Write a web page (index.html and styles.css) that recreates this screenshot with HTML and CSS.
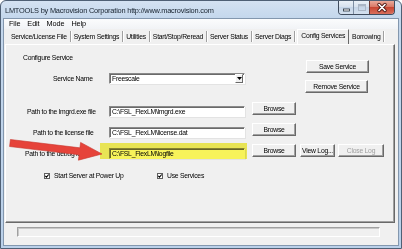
FILE: index.html
```html
<!DOCTYPE html>
<html>
<head>
<meta charset="utf-8">
<title>LMTOOLS</title>
<link rel="stylesheet" href="styles.css">
</head>
<body>
<div class="window">
  <div class="titlebar">
    <span class="title">LMTOOLS by Macrovision Corporation http://www.macrovision.com</span>
    <div class="caption">
      <span class="cap cap-min"><svg width="15" height="13" viewBox="0 0 15 13"><rect x="4.5" y="8" width="6" height="2" fill="#fff" stroke="#26303c" stroke-width="0.8"/></svg></span>
      <span class="cap cap-max"><svg width="16" height="13" viewBox="0 0 16 13"><rect x="4.5" y="3.5" width="7" height="6" fill="none" stroke="#aab6c6" stroke-width="1"/><rect x="5" y="4" width="6" height="1.5" fill="#aab6c6"/></svg></span>
      <span class="cap cap-close"><svg width="24" height="13" viewBox="0 0 24 13"><path d="M9 3.5 L15 9.5 M15 3.5 L9 9.5" stroke="#4a1612" stroke-width="3.4" stroke-linecap="round"/><path d="M9 3.5 L15 9.5 M15 3.5 L9 9.5" stroke="#fff" stroke-width="1.7" stroke-linecap="round"/></svg></span>
    </div>
  </div>
  <div class="client">
    <div class="menubar"><span>File</span><span>Edit</span><span>Mode</span><span>Help</span></div>
    <div class="tabs">
      <span class="tab">Service/License File</span>
      <span class="tab">System Settings</span>
      <span class="tab">Utilities</span>
      <span class="tab">Start/Stop/Reread</span>
      <span class="tab">Server Status</span>
      <span class="tab">Server Diags</span>
      <span class="tab tab-sel">Config Services</span>
      <span class="tab">Borrowing</span>
    </div>
    <div class="panel">
      <div class="top">
        <div class="cfg">
          <div class="heading">Configure Service</div>
          <div class="field-row svc">
            <span class="lbl lbl-svc">Service Name</span>
            <div class="combo">
              <span class="combo-val">Freescale</span>
              <span class="drop"><svg width="5" height="3" viewBox="0 0 5 3"><path d="M0 0 H5 L2.5 3 Z" fill="#000"/></svg></span>
            </div>
          </div>
        </div>
        <div class="svc-btns">
          <button class="btn btn-save">Save Service</button>
          <button class="btn btn-remove">Remove Service</button>
        </div>
      </div>
      <div class="field-row path-row">
        <span class="lbl lbl-lmgrd">Path to the lmgrd.exe file</span>
        <div class="tb">C:\FSL_FlexLM\lmgrd.exe</div>
        <button class="btn btn-browse">Browse</button>
      </div>
      <div class="field-row path-row">
        <span class="lbl lbl-license">Path to the license file</span>
        <div class="tb">C:\FSL_FlexLM\license.dat</div>
        <button class="btn btn-browse">Browse</button>
      </div>
      <div class="field-row path-row">
        <span class="lbl lbl-debug">Path to the debug log</span>
        <div class="tb">C:\FSL_FlexLM\logfile</div>
        <button class="btn btn-browse">Browse</button>
        <button class="btn btn-view">View Log...</button>
        <button class="btn btn-closelog">Close Log</button>
      </div>
      <div class="checks">
        <span class="chk chk-start"><svg class="box" width="6" height="6" viewBox="0 0 6 6"><rect x="0.5" y="0.5" width="5" height="5" fill="#fff" stroke="#5f5f5f"/><path d="M1.3 2.8 L2.5 4.1 L4.7 1.5" fill="none" stroke="#000" stroke-width="1.1"/></svg>Start Server at Power Up</span>
        <span class="chk"><svg class="box" width="6" height="6" viewBox="0 0 6 6"><rect x="0.5" y="0.5" width="5" height="5" fill="#fff" stroke="#5f5f5f"/><path d="M1.3 2.8 L2.5 4.1 L4.7 1.5" fill="none" stroke="#000" stroke-width="1.1"/></svg>Use Services</span>
      </div>
      <div class="hl"></div>
    </div>
    <div class="statusbar"><div class="status-field"></div></div>
  </div>
  <svg class="annot" width="402" height="249" viewBox="0 0 402 249">
    <polygon points="10.4,139.5 79.9,147.8 80.6,142.4 102,154 78.4,160.2 79.1,154.8 9.6,146.5" fill="#e6433a" stroke="#c8342c" stroke-width="0.6" stroke-linejoin="round"/>
  </svg>
</div>
</body>
</html>
```
FILE: styles.css
```css
* { box-sizing: border-box; margin: 0; padding: 0; }
html, body { width: 402px; height: 249px; overflow: hidden; }
body { background: #fff; font-family: "Liberation Sans", Arial, sans-serif; color: #000; }

.window {
  position: relative;
  width: 402px; height: 249px;
  display: flex; flex-direction: column;
  padding: 0 2px 2px;
  border: 1px solid #4f6075;
  border-radius: 6px 6px 0 0;
  background: linear-gradient(to bottom, #d4e2f2 0, #c4d7ec 17px, #bad0e9 100%);
}

.titlebar { height: 17px; flex: none; display: flex; align-items: flex-start; }
.title {
  margin: 5px 0 0 2px;
  font-size: 7.4px; line-height: 9px; letter-spacing: -0.2px;
  color: #15202c; white-space: nowrap;
}
.caption {
  margin: 0 4px 0 auto;
  display: flex; height: 14px;
  border: 1px solid #3f4c5e; border-top: none;
  border-radius: 0 0 4px 4px; overflow: hidden;
}
.cap { display: block; height: 13px; }
.cap svg { display: block; }
.cap-min, .cap-max { background: linear-gradient(#eaf0f7, #d6e1ee 45%, #c4d4e7 46%, #d4e0ee); }
.cap-min { width: 15px; border-right: 1px solid #7d8da2; }
.cap-max { width: 16px; border-right: 1px solid #6b3a36; }
.cap-close { width: 24px; background: linear-gradient(#eaa99a, #d87866 45%, #c7432f 46%, #d9705d); }

.client {
  flex: 1;
  display: flex; flex-direction: column;
  background: #f0f0f0;
  border: 1px solid #8397ae;
}

.menubar {
  height: 10px; flex: none;
  display: flex; gap: 7px; padding-left: 5px;
  background: linear-gradient(#fbfcfd, #f1f3f6);
  font-size: 7.3px; line-height: 10px; letter-spacing: -0.1px;
}

.tabs {
  height: 15px; flex: none;
  display: flex; padding-left: 4px;
  font-size: 6.8px; letter-spacing: -0.25px;
}
.tab {
  margin: 2px 0; padding: 0 3px;
  line-height: 11px; white-space: nowrap;
  border-right: 1px solid #a0a0a0;
  box-shadow: 1px 0 0 #fff;
}
.tab-sel {
  margin: 0 0 0 2px;
  border: 1px solid; border-color: #fff #696969 transparent #fff;
  border-bottom: none;
  box-shadow: none;
}

.panel {
  position: relative;
  height: 179px; flex: none;
  margin: 0 3px 0 1px;
  border: 1px solid; border-color: #fff #696969 #696969 #fff;
  box-shadow: inset -1px -1px 0 #a0a0a0;
  font-size: 6.8px; line-height: 8px; letter-spacing: -0.25px;
}

.top { display: flex; height: 57px; }
.cfg { width: 239px; flex: none; }
.heading { margin: 9px 0 0 17px; }
.svc { margin-top: 11px; }
.field-row { display: flex; }
.lbl { width: 103px; flex: none; white-space: nowrap; }
.lbl-svc { padding-left: 47px; margin-top: 2px; }

.combo {
  width: 136px; height: 11px; display: flex;
  background: #fff;
  border: 1px solid; border-color: #8a8a8a #fff #fff #8a8a8a;
  box-shadow: inset 1px 1px 0 #6a6a6a, 1px 1px 0 #e3e3e3;
}
.combo-val { flex: 1; padding: 1px 0 0 2px; line-height: 8px; }
.drop {
  width: 8px; height: 9px; margin-right: 1px;
  display: flex; align-items: center; justify-content: center;
  background: #f0f0f0;
  border: 1px solid; border-color: #fff #696969 #696969 #fff;
}
.drop svg { display: block; }

.svc-btns { margin-left: 60px; display: flex; flex-direction: column; }

.btn {
  display: block; height: 13px;
  font: inherit; letter-spacing: inherit; color: #000;
  background: #f0f0f0;
  border: 1px solid; border-color: #fff #696969 #696969 #fff;
  box-shadow: inset -1px -1px 0 #a0a0a0;
  text-align: center; line-height: 10px;
  white-space: nowrap;
}
.btn-save { margin: 15px 0 0 1px; width: 63px; }
.btn-remove { margin-top: 7px; width: 63px; }

.path-row { height: 13px; margin-bottom: 8px; }
.path-row .lbl { margin-top: 6px; }
.lbl-lmgrd { padding-left: 21px; }
.lbl-license { padding-left: 27px; }
.lbl-debug { padding-left: 19px; }

.tb {
  width: 136px; height: 11px; margin-top: 4px; flex: none;
  background: #fff;
  border: 1px solid; border-color: #8a8a8a #fff #fff #8a8a8a;
  box-shadow: inset 1px 1px 0 #6a6a6a, 1px 1px 0 #e3e3e3;
  padding: 1px 0 0 2px; line-height: 8px;
  white-space: nowrap; overflow: hidden;
}
.btn-browse { margin-left: 7px; width: 44px; }
.btn-view { margin-left: 4px; width: 35px; }
.btn-closelog { margin-left: 3px; width: 46px; color: #a0a0a0; }

.checks { display: flex; margin-top: 15px; padding-left: 38px; height: 8px; }
.chk { display: flex; align-items: flex-start; white-space: nowrap; }
.chk-start { width: 113px; }
.box { display: block; flex: none; margin: 1px 4px 0 0; }

.hl {
  position: absolute; left: 94px; top: 98px;
  width: 147px; height: 16px;
  background: #f7f35a;
  mix-blend-mode: multiply;
}

.statusbar { height: 22px; flex: none; padding: 4px 0 0 13px; }
.status-field {
  width: 363px; height: 10px;
  border: 1px solid; border-color: #a0a0a0 #fff #fff #a0a0a0;
  box-shadow: inset 1px 1px 0 #c8c8c8;
}

.annot { position: absolute; left: -1px; top: -1px; pointer-events: none; }
```
